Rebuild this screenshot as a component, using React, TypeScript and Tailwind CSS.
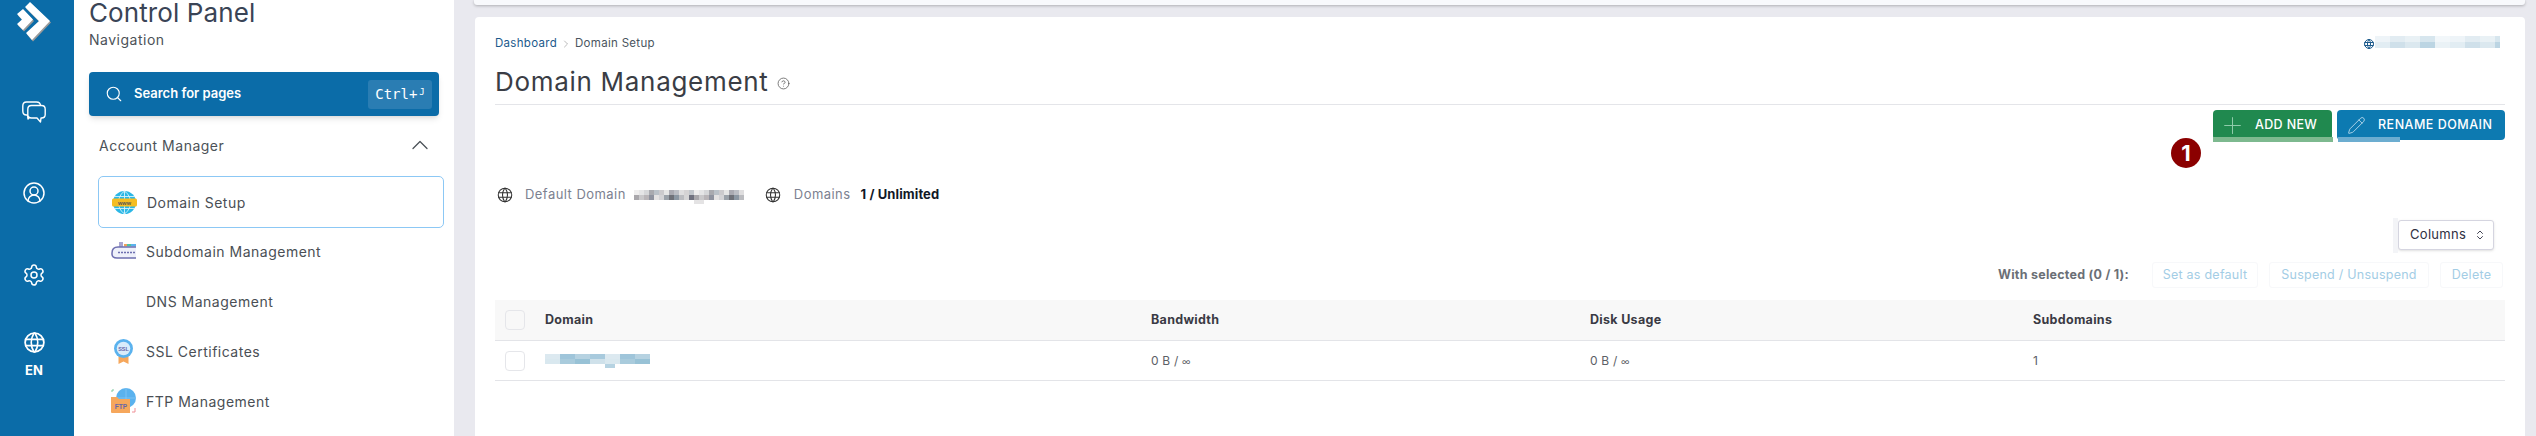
import { ChevronRight, ChevronUp, ChevronsUpDown, CircleHelp, CircleUserRound, Pencil, Plus, Search, Settings } from "lucide-react";
import { TbWorld } from "react-icons/tb";

const font = "[font-family:Inter,'Noto_Sans',sans-serif]";

// pixelated stand-ins for the redacted domain names
const mosaicGray = ["#e4e2e2", "#b9b5b8", "#8f939f", "#c9c8ca", "#71727f", "#a9a7ab", "#d6d5d6", "#8c97a3", "#bbbcc0", "#6f7179", "#d3d3d6", "#9ba2aa"];
const mosaicBlue = ["#c5dbe6", "#93bdd3", "#a9cbdc", "#6ea7c6", "#bcd5e2", "#d9e8ef", "#86b4cd", "#a1c6d9", "#cfe1ea", "#5f9fc1", "#b2d0df", "#98c2d6"];
const mosaicPale = ["#e2edf3", "#cfe0ea", "#dbe8ef", "#bcd5e3", "#eaf2f6"];

type MosaicProps = { colors: string[]; width: number; height: number; seed?: number; tail?: number };

const Mosaic = ({ colors, width, height, seed = 3, tail }: MosaicProps) => {
  const cols = Math.floor(width / 5);
  const cells = [];
  for (let x = 0; x < cols; x++) {
    for (let y = 0; y < 2; y++) {
      const c = colors[(x * 7 + y * 5 + seed * (x % 3)) % colors.length];
      cells.push(<rect key={`${x}-${y}`} x={x * 5} y={y * (height / 2)} width="5" height={height / 2} fill={c} opacity={y === 0 ? 0.6 : 1} />);
    }
  }
  return (
    <svg width={width} height={height + 4} shapeRendering="crispEdges" className="shrink-0">
      {cells}
      {tail !== undefined && <rect x={tail} y={height} width="10" height="4" fill={colors[3]} opacity="0.5" />}
    </svg>
  );
};

const Logo = () => (
  <svg width="40" height="42" viewBox="13 0 40 42">
    <g fill="#9a9a9a" transform="translate(1 1.5)">
      <path d="M30 2l20 19-18 19-6-7 13-12-14-14z" />
      <path d="M17 14l6-5 10 10.500-10 10.500-6-6 5-4.500z" />
    </g>
    <g fill="#fff">
      <path d="M30 2l20 19-18 19-6-7 13-12-14-14z" />
      <path d="M17 14l6-5 10 10.500-10 10.500-6-6 5-4.500z" />
    </g>
  </svg>
);

const ChatIcon = () => (
  <svg width="24" height="22" viewBox="0 0 24 22" fill="#0b6ca8" stroke="#fff" strokeWidth="1.400" strokeLinejoin="round">
    <path d="M4.500 1h10c2.500 0 4 1.500 4 4v5c0 2.500-1.500 4-4 4H9l-3 4-.5-4h-1C2 14 .800 12.500.800 10V5C.800 2.500 2 1 4.500 1z" />
    <path d="M9.500 4.500h10c2.200 0 3.700 1.500 3.700 3.700v5.300c0 2.200-1.500 3.500-3.700 3.500h-.5l-.5 4-3.500-4h-5.500c-2.200 0-3.700-1.300-3.700-3.500V8.200c0-2.200 1.500-3.700 3.700-3.700z" />
  </svg>
);

const WwwIcon = () => (
  <svg width="25" height="25" viewBox="0 0 25 25">
    <circle cx="12.500" cy="12.500" r="11.500" fill="#2bb7e6" />
    <path d="M12.500 1v23M2 6.500h21M2 18.500h21M12.500 1c-8 6-8 17 0 23M12.500 1c8 6 8 17 0 23" fill="none" stroke="#d8f3fb" strokeWidth="0.900" />
    <rect x="0" y="8.500" width="25" height="8" rx="1.500" fill="#f5bd22" />
    <text x="12.500" y="14.500" textAnchor="middle" fontSize="5.500" fontWeight="700" fill="#555" fontFamily="Liberation Sans">www</text>
  </svg>
);

const SubdomainIcon = () => (
  <svg width="25" height="25" viewBox="0 0 25 25">
    <rect x="8" y="3" width="4" height="5" fill="#a9a6d1" />
    <rect x="13" y="5" width="3" height="2.500" fill="#f0a25a" />
    <rect x="16" y="5" width="4" height="2.500" fill="#4fc3a1" />
    <rect x="20" y="5" width="5" height="2.500" fill="#5ab2ee" />
    <path d="M25 8H7c-4 0-6 2-6 6v1c0 3 2 4 5 4h19" fill="#eef0fa" stroke="#6e6fb0" strokeWidth="1.500" />
    <path d="M7 13.500h17" stroke="#6e6fb0" strokeWidth="1.500" strokeDasharray="2 1" />
  </svg>
);

const SslIcon = () => (
  <svg width="25" height="27" viewBox="0 0 25 27">
    <path d="M7.500 17v9l5-2.500 5 2.500v-9z" fill="#f6a75c" />
    <circle cx="12.500" cy="10.500" r="9.500" fill="#5ab2ee" />
    <circle cx="12.500" cy="10.500" r="6.800" fill="#d9ecfb" />
    <text x="12.500" y="12.500" textAnchor="middle" fontSize="5.500" fontWeight="700" fill="#6666a8" fontFamily="Liberation Sans">SSL</text>
  </svg>
);

const FtpIcon = () => (
  <svg width="25" height="26" viewBox="0 0 25 26">
    <circle cx="15" cy="10" r="10" fill="#5ab2ee" />
    <path d="M15 0v20M5 10h20" stroke="#8cc9f5" strokeWidth="0.700" />
    <path d="M1 4V2h2" fill="none" stroke="#7cc9a0" strokeWidth="1" />
    <path d="M24 20v4h-3" fill="none" stroke="#ef8f96" strokeWidth="1" />
    <path d="M0 9h6l2 2h11v14H1a1 1 0 0 1-1-1z" fill="#f6a75c" />
    <text x="10" y="20.500" textAnchor="middle" fontSize="6.500" fontWeight="700" fill="#6666a8" fontFamily="Liberation Sans">FTP</text>
  </svg>
);

const menuItems = [
  { name: "Domain Setup", icon: <WwwIcon />, active: true },
  { name: "Subdomain Management", icon: <SubdomainIcon /> },
  { name: "DNS Management", icon: null },
  { name: "SSL Certificates", icon: <SslIcon /> },
  { name: "FTP Management", icon: <FtpIcon /> },
];

const Rail = () => (
  <div className="w-[74px] shrink-0 bg-[#0b6ca8] pr-[6px] flex flex-col items-center text-white">
    <div className="h-[42px] flex items-center ml-[-2px]">
      <Logo />
    </div>
    <span className="mt-[59px]"><ChatIcon /></span>
    <CircleUserRound size={24} strokeWidth={1.5} className="mt-[58px]" />
    <Settings size={24} strokeWidth={1.5} className="mt-[58px]" />
    <TbWorld size={25} strokeWidth={1.7} className="mt-[43px]" />
    <span className="mt-[7px] text-[13px] leading-[16px] font-bold">EN</span>
  </div>
);

const Sidebar = () => (
  <div className="w-[380px] shrink-0 bg-white pl-[15px] pr-[10px]">
    <h1 className="text-[26px] leading-[26px] text-[#3a4456] tracking-[0.1px] font-normal">Control Panel</h1>
    <p className="text-[14px] leading-[18px] mt-[5px] text-[#4c5258] tracking-[0.5px]">Navigation</p>
    <div className="w-[350px] h-[44px] mt-[23px] rounded-[4px] bg-[#0b6ca8] shadow-md flex items-center pl-[16px] pr-[7px] text-white">
      <Search size={18} strokeWidth={1.5} />
      <span className="ml-[11px] text-[13px] font-semibold flex-1">Search for pages</span>
      <span className="w-[64px] h-[29px] rounded-[3px] bg-[#2a7db3] flex items-center justify-center text-[14px] [font-family:'DejaVu_Sans_Mono',monospace]">
        Ctrl+<span className="text-[9px] ml-[2px] mt-[-3px]">J</span>
      </span>
    </div>
    <div className="h-[30px] mt-[14px] pl-[10px] pr-[10px] flex items-center justify-between">
      <span className="text-[14px] text-[#4c5258] tracking-[0.5px]">Account Manager</span>
      <ChevronUp size={28} strokeWidth={1.1} className="text-[#4c5258]" />
    </div>
    {/* items sit 50px apart, the active one has a border */}
    <div className="mt-[16px] ml-[9px] flex flex-col">
      {menuItems.map((item) => (
        <div
          key={item.name}
          className={`w-[346px] flex items-center pl-[13px] ${item.active ? "h-[52px] mb-[-2px] rounded-[5px] border border-[#8cc8f5]" : "h-[50px]"}`}
        >
          <span className="w-[25px] h-[25px] flex items-center justify-center shrink-0">{item.icon}</span>
          <span className="ml-[10px] text-[14px] text-[#4a4f55] tracking-[0.5px]">{item.name}</span>
        </div>
      ))}
    </div>
  </div>
);

const Toolbar = () => (
  <div className="relative mt-[5px] flex justify-end gap-[5px]">
    <div className="relative h-[30px] w-[119px] rounded-[4px] bg-[#20894f] text-white flex items-center pl-[6px]">
      <Plus size={27} strokeWidth={0.9} className="text-[#8fcbaa]" />
      <span className="ml-[9px] text-[12.5px] font-medium tracking-[0.35px]">ADD NEW</span>
      <div className="absolute left-0 -right-px top-[27px] h-[5px] bg-[#7db98f]" />
    </div>
    <div className="relative h-[30px] w-[168px] rounded-[4px] bg-[#0d7ab1] text-white flex items-center pl-[10px]">
      <Pencil size={19} strokeWidth={1} className="text-[#cfe6f3]" />
      <span className="ml-[12px] text-[12.5px] font-medium tracking-[0.5px]">RENAME DOMAIN</span>
      <div className="absolute left-px w-[62px] top-[27px] h-[5px] bg-[#6cadd0]" />
    </div>
    <div className="absolute right-[304px] top-[28px] w-[30px] h-[30px] rounded-full bg-[#8b0000] text-white flex items-center justify-center text-[22px] font-bold">1</div>
  </div>
);

const Stats = () => (
  <div className="mt-[45px] h-[20px] flex items-center text-[13px] tracking-[0.45px] text-[#7c8190]">
    <TbWorld size={18} strokeWidth={1.4} className="text-[#333] ml-[1px]" />
    <span className="ml-[11px]">Default Domain</span>
    <span className="ml-[8px] flex pt-[4px]"><Mosaic colors={mosaicGray} width={110} height={10} tail={60} /></span>
    <TbWorld size={18} strokeWidth={1.4} className="text-[#333] ml-[20px]" />
    <span className="ml-[12px]">Domains</span>
    <span className="ml-[10px] font-bold text-[#111827] text-[13px] tracking-[0.1px]">1 / Unlimited</span>
  </div>
);

const Actions = () => (
  <>
    <div className="mt-[15px] flex justify-end pr-[11px]">
      <div className="relative w-[96px] h-[30px] rounded-[3px] border border-[#d5d5e0] bg-white shadow-sm flex items-center justify-between pl-[11px] pr-[7px] text-[13px] text-[#2f3042] tracking-[0.3px]">
        Columns
        <ChevronsUpDown size={12} strokeWidth={1.8} />
        <div className="absolute left-[-6px] top-[-3px] w-[5px] h-[35px] bg-[#f3f4f7]" />
      </div>
    </div>
    <div className="mt-[12px] h-[26px] flex items-center justify-end pr-[2px] text-[12.5px] tracking-[0.25px]">
      <span className="font-bold text-[#6b6f76] mr-[23px]">With selected (0 / 1):</span>
      <span className="w-[106px] h-[26px] flex items-center justify-center rounded-[3px] border border-[#f7f8fa] text-[#a3cde5] mr-[11px]">Set as default</span>
      <span className="w-[160px] h-[26px] flex items-center justify-center rounded-[3px] border border-[#f7f8fa] text-[#a3cde5] mr-[11px]">Suspend / Unsuspend</span>
      <span className="w-[63px] h-[26px] flex items-center justify-center rounded-[3px] border border-[#f7f8fa] text-[#a3cde5]">Delete</span>
    </div>
  </>
);

const Table = () => {
  const rowClass = "grid grid-cols-[50px_606px_439px_443px_1fr] items-center";
  const checkbox = "ml-[10px] w-[20px] h-[20px] rounded-[4px] border border-[#e5e6ea]";
  return (
    <div className="mt-[12px]">
      <div className={`${rowClass} h-[41px] bg-[#f8f8f8] border-b border-[#e3e4e8] text-[12.5px] font-bold text-[#3a3a44] tracking-[0.3px]`}>
        <div className={checkbox} />
        <span>Domain</span>
        <span>Bandwidth</span>
        <span>Disk Usage</span>
        <span>Subdomains</span>
      </div>
      <div className={`${rowClass} h-[40px] border-b border-[#e3e4e8] text-[12px] text-[#5c6066] tracking-[0.2px]`}>
        <div className={checkbox} />
        <span className="flex"><Mosaic colors={mosaicBlue} width={109} height={10} seed={5} tail={60} /></span>
        <span>0 B / <span className="text-[9px]">∞</span></span>
        <span>0 B / <span className="text-[9px]">∞</span></span>
        <span>1</span>
      </div>
    </div>
  );
};

const App = () => {
  return (
    <div className={`${font} flex h-[436px] w-[2536px] overflow-hidden bg-[#e9e9ef]`}>
      <Rail />
      <Sidebar />
      <div className="flex-1 pl-[20px] pr-[11px] flex flex-col">
        <div className="h-[5px] rounded-b-[3px] bg-[#f8f9fc] shadow-[0_1px_3px_rgba(0,0,0,0.25)]" />
        <div className="mt-[12px] flex-1 ml-px rounded-t-[4px] bg-white px-[20px] pt-[18px]">
          <div className="h-[18px] flex items-center justify-between text-[11.5px] tracking-[0.3px]">
            <div className="flex items-center">
              <span className="text-[#1c5a8c]">Dashboard</span>
              <ChevronRight size={12} strokeWidth={1} className="text-[#777] mx-[3px]" />
              <span className="text-[#4a5560]">Domain Setup</span>
            </div>
            <div className="flex items-center pr-[5px]">
              <TbWorld size={12} strokeWidth={2} className="text-[#1c5a8c]" />
              <Mosaic colors={mosaicPale} width={125} height={12} />
            </div>
          </div>
          <div className="mt-[13px] pb-[6px] border-b border-[#e4e5e9] flex items-center">
            <h2 className="text-[26px] leading-[32px] font-normal text-[#3a3d45] tracking-[0.7px]">Domain Management</h2>
            <CircleHelp size={13} strokeWidth={1.4} className="ml-[8px] mt-[3px] text-[#555]" />
          </div>
          <Toolbar />
          <Stats />
          <Actions />
          <Table />
        </div>
      </div>
    </div>
  );
};

export default App;
